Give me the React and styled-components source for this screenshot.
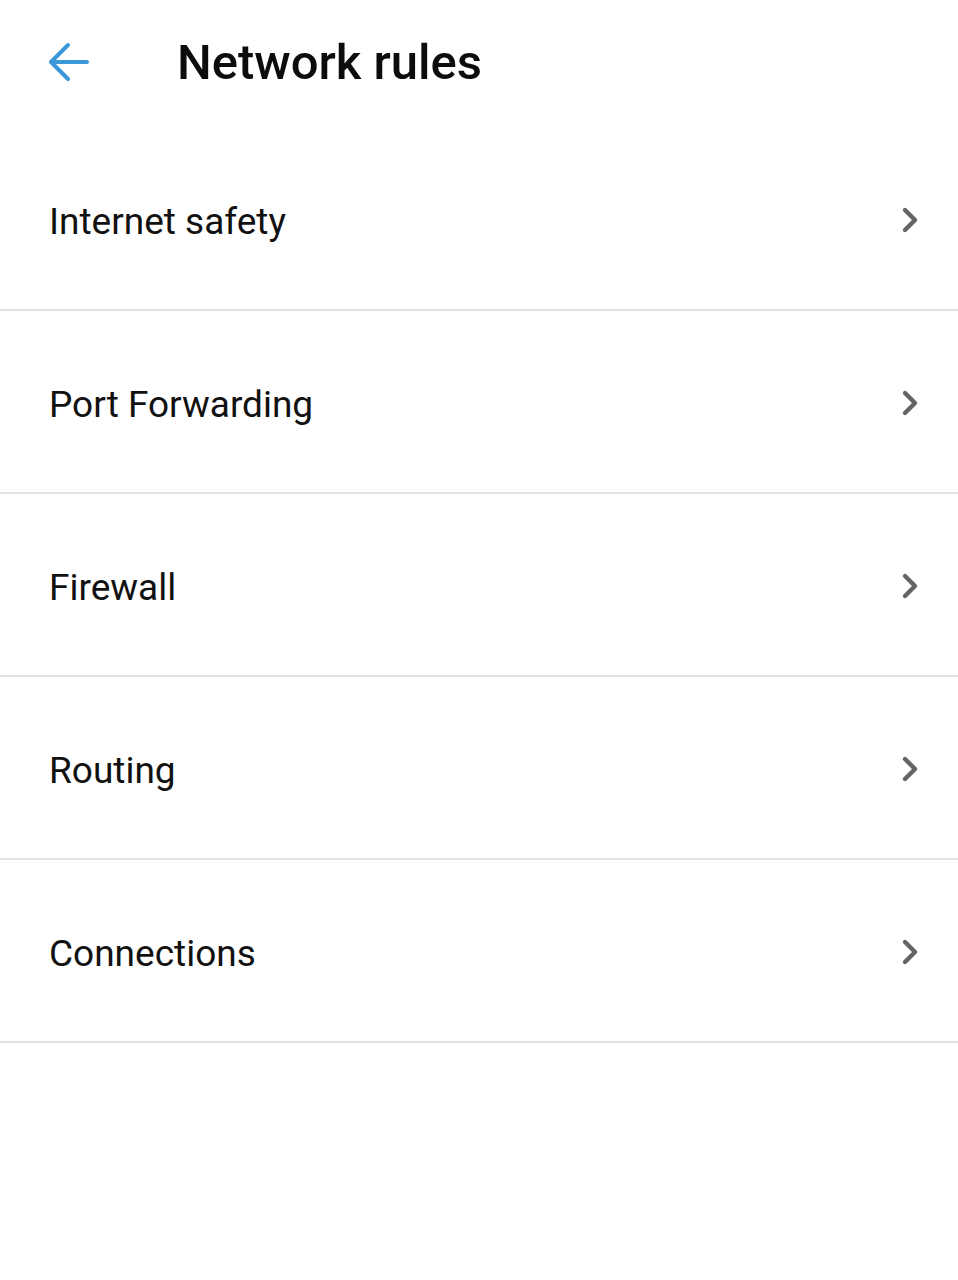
import React from "react";
import styled, { createGlobalStyle } from "styled-components";

const Global = createGlobalStyle`
  html, body { margin: 0; padding: 0; background: #fff; }
  body { font-family: Roboto, "Noto Sans", sans-serif; color: #111; }
`;

const Page = styled.div`
  width: 958px;
  min-height: 1280px;
  background: #fff;
  display: flex;
  flex-direction: column;
`;

const Header = styled.header`
  height: 128px;
  display: flex;
  align-items: center;
  padding: 0 0 4px 48px;
  box-sizing: border-box;
`;

const BackButton = styled.button`
  border: none;
  background: none;
  padding: 0;
  width: 42px;
  height: 42px;
  display: flex;
  align-items: center;
  justify-content: center;
  cursor: pointer;
`;

const Title = styled.h1`
  margin: 0 0 0 87px;
  font-size: 49px;
  font-weight: 500;
  color: #0c0c0c;
  letter-spacing: 0;
`;

const List = styled.ul`
  list-style: none;
  margin: 0;
  padding: 0;
`;

const Item = styled.li`
  height: 176px;
  border-bottom: 2px solid #e3e3e3;
  display: flex;
  align-items: center;
  justify-content: space-between;
  padding: 5px 36px 0 49px;
  box-sizing: content-box;
`;

const Label = styled.span`
  font-size: 37px;
  color: #111;
`;

const Chevron = () => (
  <svg width="22" height="30" viewBox="0 0 22 30">
    <path d="M5 4 L15 14 L5 24" fill="none" stroke="#646464" strokeWidth="4.4" strokeLinecap="round" strokeLinejoin="round" />
  </svg>
);

const items = ["Internet safety", "Port Forwarding", "Firewall", "Routing", "Connections"];

export default function App() {
  return (
    <Page>
      <Global />
      <Header>
        <BackButton aria-label="Back">
          <svg width="42" height="42" viewBox="0 0 42 42">
            <path d="M39 21 H4 M20 4 L3 21 L20 38" fill="none" stroke="#3a97d8" strokeWidth="4" strokeLinecap="round" strokeLinejoin="round" />
          </svg>
        </BackButton>
        <Title>Network rules</Title>
      </Header>
      <List>
        {items.map((t) => (
          <Item key={t}>
            <Label>{t}</Label>
            <Chevron />
          </Item>
        ))}
      </List>
    </Page>
  );
}
